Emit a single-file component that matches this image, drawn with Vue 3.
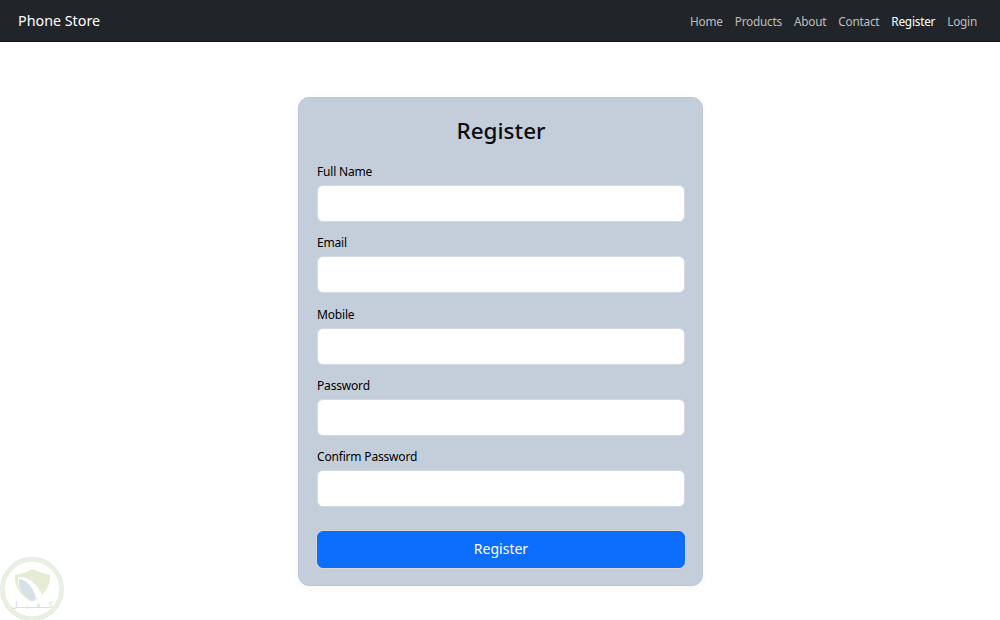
<script setup>
const links = [
  { label: 'Home' },
  { label: 'Products' },
  { label: 'About' },
  { label: 'Contact' },
  { label: 'Register', active: true },
  { label: 'Login' },
]
const fields = [
  { label: 'Full Name', type: 'text' },
  { label: 'Email', type: 'email' },
  { label: 'Mobile', type: 'tel' },
  { label: 'Password', type: 'password' },
  { label: 'Confirm Password', type: 'password' },
]
</script>

<template>
  <div class="page">
    <nav class="navbar">
      <span class="brand">Phone Store</span>
      <ul class="links">
        <li v-for="l in links" :key="l.label" :class="{ active: l.active }">{{ l.label }}</li>
      </ul>
    </nav>
    <main class="main">
      <form class="card" @submit.prevent>
        <h1 class="title">Register</h1>
        <div v-for="f in fields" :key="f.label" class="field">
          <label class="label">{{ f.label }}</label>
          <input class="input" :type="f.type" />
        </div>
        <button class="submit" type="submit">Register</button>
      </form>
    </main>
    <div class="watermark">
      <svg width="66" height="66" viewBox="0 0 66 66">
        <defs>
          <filter id="soft" x="-10%" y="-10%" width="120%" height="120%">
            <feGaussianBlur stdDeviation="0.6" />
          </filter>
        </defs>
        <circle cx="32" cy="32" r="31.3" fill="none" stroke="#e0e7e7" stroke-width="1.2" />
        <circle cx="32" cy="32" r="29" fill="#fff" stroke="#e8f1df" stroke-width="3.6" filter="url(#soft)" />
        <g filter="url(#soft)">
          <path d="M33 12 C27 15 21 17 15 18 C14 28 19 38 32 45 C45 38 51 28 50 18 C44 17 39 15 33 12 Z" fill="#e4edd4" />
          <path d="M18 20 C28 19 38 27 42 38 C40 40 36 42 34 43 C24 39 17 31 18 20 Z" fill="#fff" />
          <path d="M19 22 C27 23 34 31 36 42 L32 44 C24 39 18 32 19 22 Z" fill="#d6e0e7" />
        </g>
      </svg>
      <span class="wm-text">كـــفـــيـــل</span>
    </div>
  </div>
</template>

<style scoped>
.page {
  position: relative;
  min-height: 620px;
  background: #fff;
  font-family: "Noto Sans", "Open Sans", sans-serif;
  color: #000;
}
.navbar {
  height: 41px;
  display: flex;
  align-items: center;
  justify-content: space-between;
  padding: 0 23px 0 18px;
  background: #212529;
  border-bottom: 1px solid #111;
}
.brand {
  color: #fff;
  font-size: 14.3px;
}
.links {
  display: flex;
  gap: 12px;
  list-style: none;
  margin: 0;
  padding: 0;
  font-size: 11.8px;
  letter-spacing: -0.23px;
  color: rgba(255, 255, 255, 0.7);
}
.links .active {
  color: #fff;
}
.main {
  display: flex;
  justify-content: center;
  padding: 55px 0 0 1px;
}
.card {
  width: 405px;
  height: 489px;
  box-sizing: border-box;
  padding: 18px 17px 18px 18px;
  background: #c4cedb;
  border: 1px solid #bcc7d5;
  border-radius: 11px;
  box-shadow: 0 2px 8px rgba(0, 0, 0, 0.04);
}
.title {
  margin: 0 0 18px;
  text-align: center;
  font-size: 22.5px;
  line-height: 30px;
  font-weight: 500;
  color: #0b0d10;
}
.field {
  margin-bottom: 13.3px;
}
.label {
  display: block;
  font-size: 12px;
  letter-spacing: -0.18px;
  line-height: 16px;
  margin-bottom: 5px;
  color: #000;
}
.input {
  display: block;
  width: 100%;
  height: 37px;
  box-sizing: border-box;
  background: #fff;
  border: 1px solid #d3dae3;
  border-radius: 6px;
  outline: none;
}
.submit {
  display: block;
  width: 100%;
  height: 37px;
  margin-top: 24px;
  padding: 0 0 2px;
  background: #0d6efd;
  color: #fff;
  border: 1px solid #0d6efd;
  border-radius: 6px;
  box-shadow: 0 0 0 1px rgba(240, 228, 196, 0.45);
  font-family: inherit;
  font-size: 14px;
}
.watermark {
  position: absolute;
  left: 0;
  top: 557px;
  width: 66px;
  height: 66px;
}
.wm-text {
  position: absolute;
  left: 0;
  right: 2px;
  top: 42px;
  text-align: center;
  font-family: "DejaVu Sans", sans-serif;
  font-size: 9px;
  line-height: 12px;
  color: #d5dfca;
}
</style>

<style>
html, body { margin: 0; overflow: hidden; }
</style>
